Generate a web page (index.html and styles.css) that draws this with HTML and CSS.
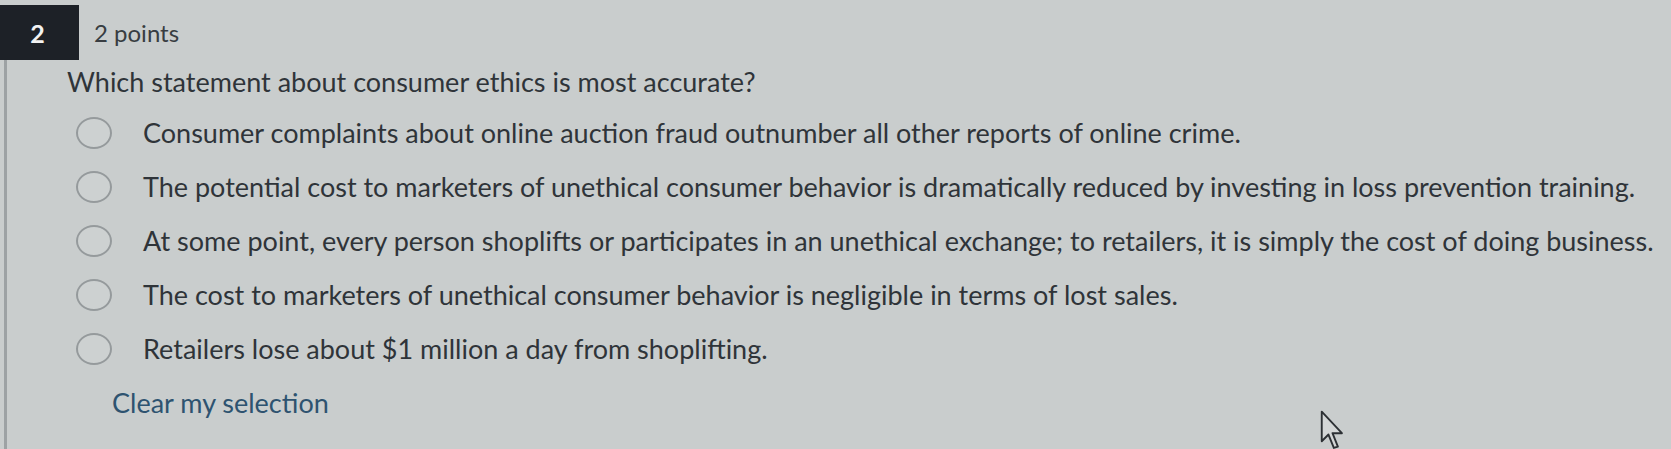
FILE: index.html
```html
<!DOCTYPE html>
<html>
<head>
<meta charset="utf-8">
<link rel="stylesheet" href="styles.css">
</head>
<body>
<div class="page">
  <div class="header">
    <div class="qnum">2</div>
    <div class="points">2 points</div>
  </div>
  <div class="question">
    <div class="prompt">Which statement about consumer ethics is most accurate?</div>
    <div class="options">
      <div class="option"><span class="radio"></span><span class="label">Consumer complaints about online auction fraud outnumber all other reports of online crime.</span></div>
      <div class="option"><span class="radio"></span><span class="label">The potential cost to marketers of unethical consumer behavior is dramatically reduced by investing in loss prevention training.</span></div>
      <div class="option"><span class="radio"></span><span class="label">At some point, every person shoplifts or participates in an unethical exchange; to retailers, it is simply the cost of doing business.</span></div>
      <div class="option"><span class="radio"></span><span class="label">The cost to marketers of unethical consumer behavior is negligible in terms of lost sales.</span></div>
      <div class="option"><span class="radio"></span><span class="label">Retailers lose about $1 million a day from shoplifting.</span></div>
    </div>
    <div class="clear">Clear my selection</div>
  </div>
  <svg class="cursor" width="27" height="43" viewBox="0 0 20 32"><path d="M2 2 L2 24 L7 19 L11 29 L14 28 L10 18 L17 18 Z" fill="#d3d6d6" stroke="#2c3034" stroke-width="1.4" stroke-linejoin="round"/></svg>
</div>
</body>
</html>
```
FILE: styles.css
```css
html, body {
  margin: 0;
  padding: 0;
  background: #c9cdcd;
}
.page {
  position: relative;
  width: 1671px;
  height: 449px;
  overflow: hidden;
  font-family: Lato, "Open Sans", sans-serif;
  color: #33383d;
  background: #c9cdcd;
}
.header {
  display: flex;
  align-items: center;
  padding-top: 5px;
  height: 55px;
}
.qnum {
  width: 79px;
  height: 55px;
  background: #1d2127;
  color: #f2f2f2;
  font-size: 25px;
  font-weight: 700;
  display: flex;
  align-items: center;
  justify-content: center;
  box-sizing: border-box;
  padding-right: 4px;
}
.points {
  margin-left: 15px;
  font-size: 24px;
  color: #383d42;
}
.question {
  margin-left: 4px;
  border-left: 3px solid #9da2a4;
  padding-left: 60px;
  padding-top: 6px;
  height: 400px;
}
.prompt {
  font-size: 27px;
  line-height: 32px;
  color: #2f3439;
}
.options {
  display: flex;
  flex-direction: column;
  gap: 22px;
  margin-top: 19px;
  margin-left: 9px;
}
.option {
  display: flex;
  align-items: center;
  height: 32px;
}
.radio {
  width: 32px;
  height: 28px;
  border: 2px solid #959a9c;
  border-radius: 50%;
  background: #cdd1d1;
  flex: none;
}
.label {
  margin-left: 31px;
  font-size: 27px;
  line-height: 32px;
  white-space: nowrap;
  color: #2f3439;
}
.clear {
  margin-top: 22px;
  margin-left: 45px;
  font-size: 27px;
  line-height: 32px;
  color: #2e5370;
}
.cursor {
  position: absolute;
  left: 1319px;
  top: 409px;
}
```
